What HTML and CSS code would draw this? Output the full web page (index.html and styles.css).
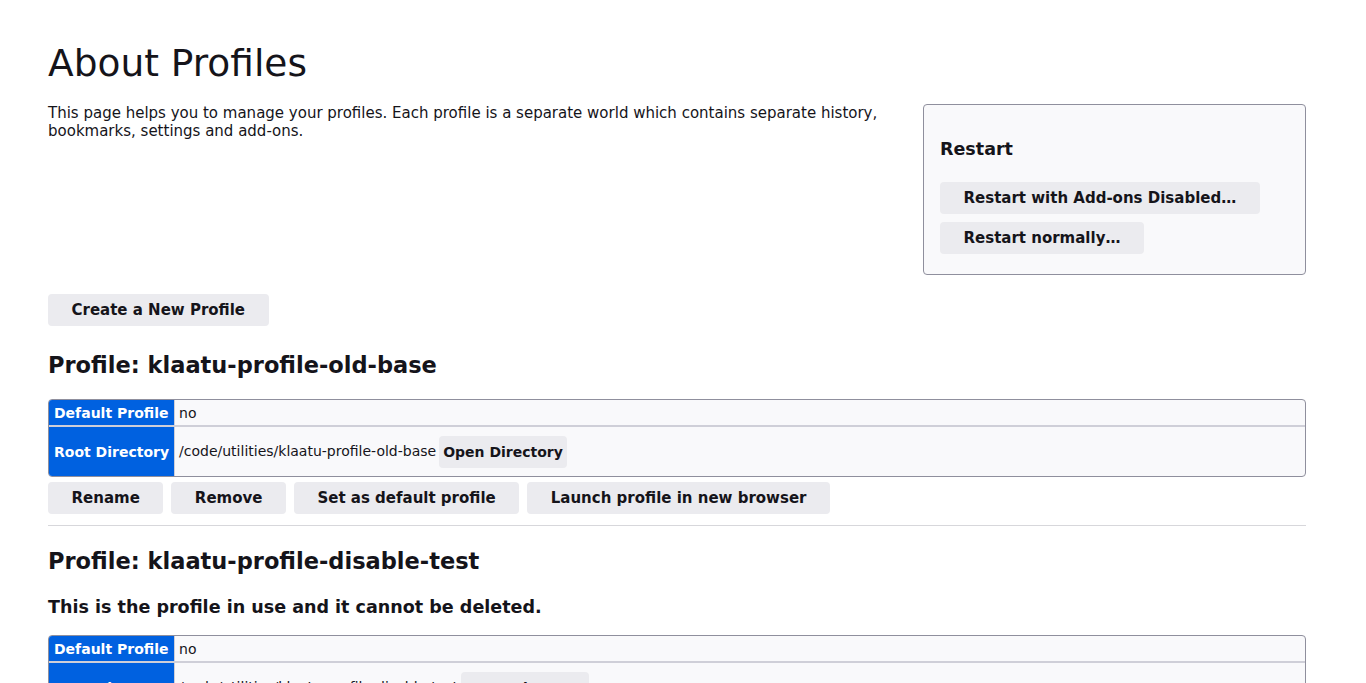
FILE: index.html
```html
<!DOCTYPE html>
<html lang="en">
<head>
<meta charset="utf-8">
<title>About Profiles</title>
<link rel="stylesheet" href="styles.css">
</head>
<body>
<main class="page">
  <h1 class="title">About Profiles</h1>
  <div class="intro">
    <p class="intro-text">This page helps you to manage your profiles. Each profile is a separate world which contains separate history, bookmarks, settings and add-ons.</p>
    <aside class="action-box">
      <h3 class="box-title">Restart</h3>
      <div class="box-buttons">
        <button class="btn">Restart with Add-ons Disabled…</button>
        <button class="btn">Restart normally…</button>
      </div>
    </aside>
  </div>
  <div class="create-row">
    <button class="btn">Create a New Profile</button>
  </div>

  <section class="profile">
    <h2 class="profile-name">Profile: klaatu-profile-old-base</h2>
    <table class="info">
      <tr class="row-short"><th>Default Profile</th><td>no</td></tr>
      <tr class="row-tall"><th>Root Directory</th><td><span class="path">/code/utilities/klaatu-profile-old-base</span><button class="btn btn-small">Open Directory</button></td></tr>
    </table>
    <div class="actions">
      <button class="btn">Rename</button>
      <button class="btn">Remove</button>
      <button class="btn">Set as default profile</button>
      <button class="btn">Launch profile in new browser</button>
    </div>
  </section>

  <hr class="sep">

  <section class="profile">
    <h2 class="profile-name second">Profile: klaatu-profile-disable-test</h2>
    <h3 class="in-use">This is the profile in use and it cannot be deleted.</h3>
    <table class="info">
      <tr class="row-short"><th>Default Profile</th><td>no</td></tr>
      <tr class="row-tall"><th>Root Directory</th><td><span class="path">/code/utilities/klaatu-profile-disable-test</span><button class="btn btn-small">Open Directory</button></td></tr>
    </table>
  </section>
</main>
</body>
</html>
```

FILE: styles.css
```css
html, body {
  margin: 0;
  padding: 0;
  background: #ffffff;
}
body {
  font-family: "DejaVu Sans", sans-serif;
  color: #15141a;
  font-size: 15px;
}
.page {
  padding: 0 60px 40px 48px;
}
.title {
  font-size: 37.5px;
  font-weight: normal;
  margin: 0;
  padding-top: 40px;
  line-height: 46px;
}
.intro {
  display: flex;
  align-items: flex-start;
  margin-top: 18px;
}
.intro-text {
  flex: 1;
  margin: 0;
  line-height: 18px;
  font-size: 15px;
  padding-right: 40px;
}
.action-box {
  width: 349px;
  padding: 16px 16px 20px;
  background: #f9f9fb;
  border: 1px solid #8f8f9d;
  border-radius: 4px;
}
.box-title {
  font-size: 17.5px;
  font-weight: bold;
  margin: 17px 0 22px;
  line-height: 22px;
}
.box-buttons {
  display: flex;
  flex-direction: column;
  align-items: flex-start;
  gap: 8px;
}
.btn {
  font-family: "DejaVu Sans", sans-serif;
  font-size: 15px;
  font-weight: bold;
  color: #15141a;
  background: #ebebef;
  border: none;
  border-radius: 4px;
  height: 32px;
  padding: 0 23.5px;
  margin: 0;
}
.create-row {
  margin-top: 19px;
}
.profile-name {
  font-size: 22.5px;
  font-weight: bold;
  margin: 25px 0 20px;
  line-height: 28px;
}
.profile-name.second {
  margin-top: 21px;
  margin-bottom: 25px;
}
.in-use {
  font-size: 17.55px;
  font-weight: bold;
  margin: -4px 0 17px;
  line-height: 22px;
}
.info {
  width: 100%;
  border-collapse: separate;
  border-spacing: 0;
  border: 1px solid #8f8f9d;
  border-radius: 4px;
  background: #f9f9fb;
  font-size: 14px;
  overflow: hidden;
}
.info th {
  background: #0061e0;
  color: #ffffff;
  text-align: left;
  font-weight: bold;
  width: 1%;
  padding: 0 5px;
  white-space: nowrap;
  border-right: 1px solid #cfcfd8;
}
.info td {
  padding: 0 4px;
}
.info .row-short th, .info .row-short td {
  height: 25px;
  border-bottom: 2px solid #cfcfd8;
}
.info .row-tall th, .info .row-tall td {
  height: 49px;
}
.path {
  margin-right: 3px;
}
.btn-small {
  font-size: 14px;
  padding: 0 4px;
  height: 32px;
  vertical-align: middle;
}
.actions {
  display: flex;
  gap: 8px;
  margin-top: 5px;
}
.sep {
  border: none;
  border-top: 1px solid #d7d7db;
  margin: 11px 0 0;
}
```
